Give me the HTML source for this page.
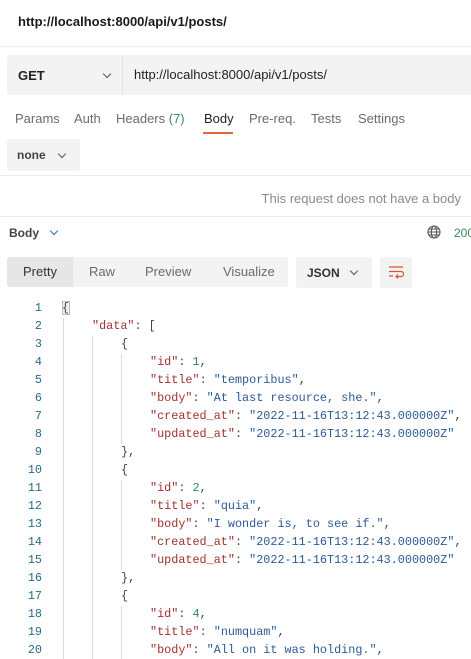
<!DOCTYPE html>
<html><head><meta charset="utf-8"><style>
*{margin:0;padding:0;box-sizing:border-box}
body{width:471px;height:659px;overflow:hidden;background:#fff;font-family:"Liberation Sans",sans-serif;position:relative;color:#212121}
.a{position:absolute;white-space:nowrap}
.hr{position:absolute;left:0;width:471px;height:1px;background:#ececec}
.chev{position:absolute;width:6px;height:6px;border-right:1.2px solid #555;border-bottom:1.2px solid #555;transform:rotate(45deg)}
.code{font-family:"Liberation Mono",monospace;font-size:11.8px;line-height:18px}
.ln{position:absolute;width:42px;text-align:right;left:0;color:#2b6a8a}
.k{color:#a3302c}.s{color:#2c5a96}.n{color:#2a8a5a}.p{color:#444}
.g{position:absolute;width:1px;background:#ddd}
</style></head><body>
<div class="a" style="left:18px;top:14px;font-size:13px;font-weight:bold;color:#1a1a1a">http://localhost:8000/api/v1/posts/</div>
<div class="hr" style="top:46px"></div>
<div class="a" style="left:7px;top:55px;width:464px;height:40px;background:#f3f3f3;border-radius:3px 0 0 3px"></div>
<div class="a" style="left:122px;top:55px;width:1px;height:40px;background:#e2e2e2"></div>
<div class="a" style="left:18px;top:68px;font-size:13px;font-weight:bold;color:#222">GET</div>
<div class="chev" style="left:104px;top:71px"></div>
<div class="a" style="left:134px;top:67px;font-size:13px;color:#222">http://localhost:8000/api/v1/posts/</div>
<div class="a" style="left:15px;top:111px;font-size:13px;color:#6b6b6b">Params</div>
<div class="a" style="left:74px;top:111px;font-size:13px;color:#6b6b6b">Auth</div>
<div class="a" style="left:116px;top:111px;font-size:13px;color:#6b6b6b">Headers <span style="color:#3a8a5a">(7)</span></div>
<div class="a" style="left:204px;top:111px;font-size:13px;color:#222">Body</div>
<div class="a" style="left:203px;top:132px;width:30px;height:2px;background:#e06a3a"></div>
<div class="a" style="left:249px;top:111px;font-size:13px;color:#6b6b6b">Pre-req.</div>
<div class="a" style="left:311px;top:111px;font-size:13px;color:#6b6b6b">Tests</div>
<div class="a" style="left:358px;top:111px;font-size:13px;color:#6b6b6b">Settings</div>
<div class="a" style="left:7px;top:139px;width:73px;height:32px;background:#f3f3f3;border-radius:3px"></div>
<div class="a" style="left:17px;top:148px;font-size:12px;font-weight:bold;color:#444">none</div>
<div class="chev" style="left:59px;top:151px"></div>
<div class="hr" style="top:175px"></div>
<div class="a" style="right:10px;top:191px;font-size:13px;color:#8a8a8a">This request does not have a body</div>
<div class="hr" style="top:216px"></div>
<div class="a" style="left:9px;top:226px;font-size:12px;font-weight:bold;color:#444">Body</div>
<div class="chev" style="left:51px;top:228px;border-color:#2a6ab0"></div>
<svg class="a" style="left:427px;top:225px" width="14" height="14" viewBox="0 0 14 14" fill="none" stroke="#555" stroke-width="1.1"><circle cx="7" cy="7" r="6"/><ellipse cx="7" cy="7" rx="2.7" ry="6"/><path d="M1 7h12M2 4h10M2 10h10"/></svg>
<div class="a" style="left:454px;top:226px;font-size:12px;color:#3a8a5a">200</div>
<div class="a" style="left:7px;top:257px;width:281px;height:30px;background:#f3f3f3;border-radius:3px"></div>
<div class="a" style="left:7px;top:257px;width:66px;height:30px;background:#e6e6e6;border-radius:3px 0 0 3px"></div>
<div class="a" style="left:23px;top:264px;font-size:13px;color:#333">Pretty</div>
<div class="a" style="left:89px;top:264px;font-size:13px;color:#6b6b6b">Raw</div>
<div class="a" style="left:145px;top:264px;font-size:13px;color:#6b6b6b">Preview</div>
<div class="a" style="left:223px;top:264px;font-size:13px;color:#6b6b6b">Visualize</div>
<div class="a" style="left:296px;top:257px;width:76px;height:31px;background:#f3f3f3;border-radius:3px"></div>
<div class="a" style="left:307px;top:266px;font-size:12px;font-weight:bold;color:#333">JSON</div>
<div class="chev" style="left:351px;top:268px"></div>
<div class="a" style="left:380px;top:257px;width:32px;height:31px;background:#f3f3f3;border-radius:3px"></div>
<svg class="a" style="left:388px;top:265px" width="16" height="14" viewBox="0 0 16 14" fill="none" stroke="#d8552b" stroke-width="1.2"><path d="M1 2h14M1 6.5h12a2.5 2.5 0 0 1 0 5H8M10 9.5l-2 2 2 2M1 11h4"/></svg>
<div class="a" style="left:62px;top:301px;width:8px;height:14px;background:#eee;border:1px solid #bbb"></div>
<div class="g" style="left:63px;top:318px;height:341px"></div>
<div class="g" style="left:92px;top:336px;height:323px"></div>
<div class="g" style="left:121px;top:354px;height:90px"></div>
<div class="g" style="left:121px;top:480px;height:90px"></div>
<div class="g" style="left:121px;top:606px;height:53px"></div>
<div class="code">
<div class="ln" style="top:299px">1</div><div class="a p" style="left:62px;top:299px">{</div>
<div class="ln" style="top:317px">2</div><div class="a" style="left:92px;top:317px"><span class="k">"data"</span><span class="p">: [</span></div>
<div class="ln" style="top:335px">3</div><div class="a p" style="left:121px;top:335px">{</div>
<div class="ln" style="top:353px">4</div><div class="a" style="left:150px;top:353px"><span class="k">"id"</span><span class="p">: </span><span class="n">1</span><span class="p">,</span></div>
<div class="ln" style="top:371px">5</div><div class="a" style="left:150px;top:371px"><span class="k">"title"</span><span class="p">: </span><span class="s">"temporibus"</span><span class="p">,</span></div>
<div class="ln" style="top:389px">6</div><div class="a" style="left:150px;top:389px"><span class="k">"body"</span><span class="p">: </span><span class="s">"At last resource, she."</span><span class="p">,</span></div>
<div class="ln" style="top:407px">7</div><div class="a" style="left:150px;top:407px"><span class="k">"created_at"</span><span class="p">: </span><span class="s">"2022-11-16T13:12:43.000000Z"</span><span class="p">,</span></div>
<div class="ln" style="top:425px">8</div><div class="a" style="left:150px;top:425px"><span class="k">"updated_at"</span><span class="p">: </span><span class="s">"2022-11-16T13:12:43.000000Z"</span></div>
<div class="ln" style="top:443px">9</div><div class="a p" style="left:121px;top:443px">},</div>
<div class="ln" style="top:461px">10</div><div class="a p" style="left:121px;top:461px">{</div>
<div class="ln" style="top:479px">11</div><div class="a" style="left:150px;top:479px"><span class="k">"id"</span><span class="p">: </span><span class="n">2</span><span class="p">,</span></div>
<div class="ln" style="top:497px">12</div><div class="a" style="left:150px;top:497px"><span class="k">"title"</span><span class="p">: </span><span class="s">"quia"</span><span class="p">,</span></div>
<div class="ln" style="top:515px">13</div><div class="a" style="left:150px;top:515px"><span class="k">"body"</span><span class="p">: </span><span class="s">"I wonder is, to see if."</span><span class="p">,</span></div>
<div class="ln" style="top:533px">14</div><div class="a" style="left:150px;top:533px"><span class="k">"created_at"</span><span class="p">: </span><span class="s">"2022-11-16T13:12:43.000000Z"</span><span class="p">,</span></div>
<div class="ln" style="top:551px">15</div><div class="a" style="left:150px;top:551px"><span class="k">"updated_at"</span><span class="p">: </span><span class="s">"2022-11-16T13:12:43.000000Z"</span></div>
<div class="ln" style="top:569px">16</div><div class="a p" style="left:121px;top:569px">},</div>
<div class="ln" style="top:587px">17</div><div class="a p" style="left:121px;top:587px">{</div>
<div class="ln" style="top:605px">18</div><div class="a" style="left:150px;top:605px"><span class="k">"id"</span><span class="p">: </span><span class="n">4</span><span class="p">,</span></div>
<div class="ln" style="top:623px">19</div><div class="a" style="left:150px;top:623px"><span class="k">"title"</span><span class="p">: </span><span class="s">"numquam"</span><span class="p">,</span></div>
<div class="ln" style="top:641px">20</div><div class="a" style="left:150px;top:641px"><span class="k">"body"</span><span class="p">: </span><span class="s">"All on it was holding."</span><span class="p">,</span></div>
</div>
</body></html>
